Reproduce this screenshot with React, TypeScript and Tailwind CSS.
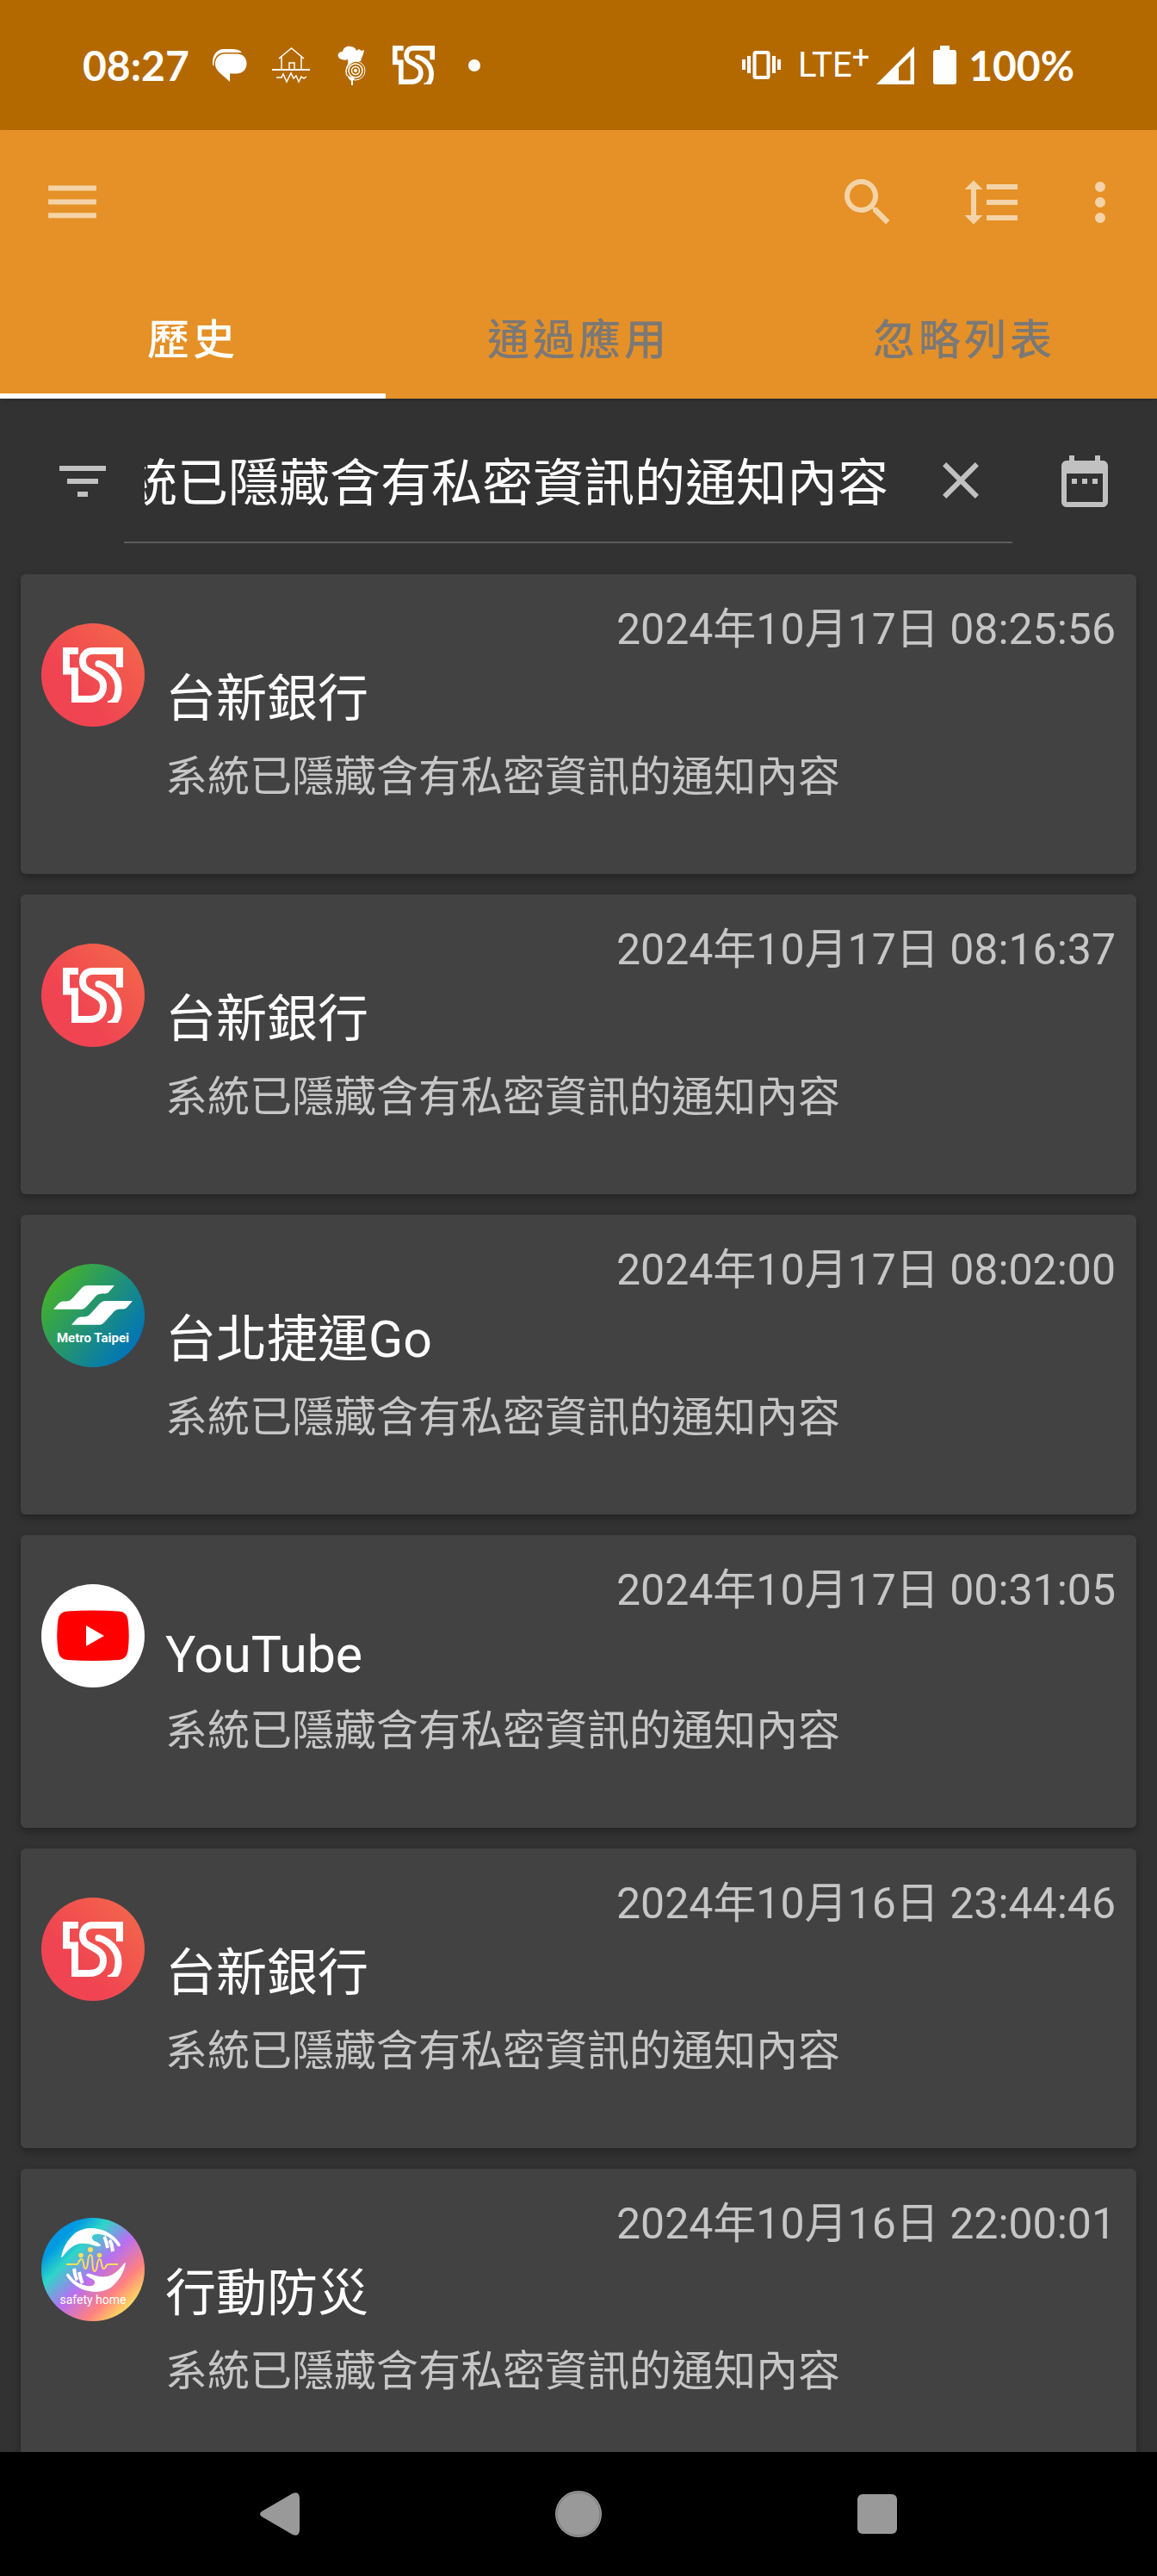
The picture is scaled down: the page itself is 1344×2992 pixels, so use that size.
import React, { useEffect, useRef, useState } from "react";

const HIDDEN_TEXT = "系統已隱藏含有私密資訊的通知內容";

const notifications = [
  { app: "taishin", title: "台新銀行", time: "2024年10月17日 08:25:56" },
  { app: "taishin", title: "台新銀行", time: "2024年10月17日 08:16:37" },
  { app: "metro", title: "台北捷運Go", time: "2024年10月17日 08:02:00" },
  { app: "youtube", title: "YouTube", time: "2024年10月17日 00:31:05" },
  { app: "taishin", title: "台新銀行", time: "2024年10月16日 23:44:46" },
  { app: "safety", title: "行動防災", time: "2024年10月16日 22:00:01" },
];

const tabs = ["歷史", "通過應用", "忽略列表"];

const TaishinMark = () => (
  <g fill="none" stroke="#fff" strokeWidth="8">
    <path d="M43 32H29V55.500H39V88H56C67 88 72 81 72 73C72 66 69 63 60 58C52 54 48 52 48 44C48 36 53 32 60 32H91V51" />
    <path d="M77 94C86 94 89.500 84 89.500 75C89.500 60 78 50 67 47" />
    <circle cx="66.500" cy="47" r="4" fill="#fff" stroke="none" />
  </g>
);

const Icon = ({ d }: { d: string }) => (
  <svg viewBox="0 0 24 24" className="w-[72px] h-[72px]" fill="currentColor">
    <path d={d} />
  </svg>
);

const TaishinLogo = () => (
  <svg viewBox="0 0 120 120" className="w-full h-full">
    <defs>
      <linearGradient id="taishin" x1="0.35" y1="0.65" x2="0.95" y2="0.1">
        <stop offset="0" stopColor="#f04452" />
        <stop offset="1" stopColor="#f3674a" />
      </linearGradient>
      <clipPath id="markBottom">
        <rect width="120" height="92" />
      </clipPath>
    </defs>
    <circle cx="60" cy="60" r="60" fill="url(#taishin)" />
    <g clipPath="url(#markBottom)">
      <TaishinMark />
    </g>
  </svg>
);

const MetroLogo = () => (
  <svg viewBox="0 0 120 120" className="w-full h-full">
    <defs>
      <linearGradient id="metro" x1="0.1" y1="0.2" x2="0.9" y2="0.8">
        <stop offset="0" stopColor="#43b02f" />
        <stop offset="1" stopColor="#0075b8" />
      </linearGradient>
      <path
        id="metroWing"
        d="M14 52.700L20 46C22 44 24 43.500 27 43.500C33 43.500 34 42 37 39L46 29C49 26 50 25 55 25H85L79 32C77 34 76 34.500 72 34.500C67 34.500 65 35.500 62 39L53 49C50 52 49 52.700 46 52.700Z"
      />
    </defs>
    <circle cx="60" cy="60" r="60" fill="url(#metro)" />
    <use href="#metroWing" fill="#fff" />
    <use href="#metroWing" x="21" y="18" fill="#fff" />
    <text
      x="60"
      y="91"
      textAnchor="middle"
      fill="#fff"
      className="font-['Roboto',sans-serif] font-bold text-[15px]"
    >
      Metro Taipei
    </text>
  </svg>
);

const YoutubeLogo = () => (
  <svg viewBox="0 0 120 120" className="w-full h-full">
    <circle cx="60" cy="60" r="60" fill="#fff" />
    <path
      d="M30 31.500Q60 29.500 90 31.500Q99 32 100.500 41Q103 60 100.500 78Q99 87 90 88Q60 90 30 88Q21 87 19.500 78Q17 60 19.500 41Q21 32 30 31.500Z"
      fill="#f00"
    />
    <path d="M52 48L73 60L52 72Z" fill="#fff" />
  </svg>
);

const SafetyLogo = () => (
  <svg viewBox="0 0 120 120" className="w-full h-full">
    <defs>
      <linearGradient id="safety" x1="0" y1="0" x2="1" y2="1">
        <stop offset="0.2" stopColor="#0099e2" />
        <stop offset="0.33" stopColor="#2fd5c8" />
        <stop offset="0.52" stopColor="#b670f2" />
        <stop offset="0.71" stopColor="#ff8080" />
        <stop offset="0.87" stopColor="#ffe45c" />
      </linearGradient>
      <g id="hand">
        <path
          d="M23 46C25 34 31 25 39 18C47 12 58 11 66 13C78 15 87 23 92 31Q92 34 89 33C85 27 80 22 72 20C66 18 60 18 59 22C58 27 64 27 69 31Q69 34 64 33C57 30 50 29 44 30C36 32 29 39 25 45Z"
          fill="#fff"
        />
        <path d="M73 22C75 25 76 30 77 35M79 26C82 29 82 34 83 39" stroke="#fff" strokeWidth="4" fill="none" />
      </g>
    </defs>
    <circle cx="60" cy="60" r="60" fill="url(#safety)" />
    <use href="#hand" />
    <use href="#hand" transform="rotate(180 60.500 49)" />
    <path
      d="M29 54H41C44 54 43 48 46.500 48S48 59 51.500 59S53 43 57 43S58 62 62 62S64 48 67.500 48S69 59 72.500 59S74 54 78 54H89"
      fill="none"
      stroke="#fbe05a"
      strokeWidth="2"
    />
    <g fill="#fbe05a">
      <circle cx="46" cy="43.500" r="2.800" />
      <circle cx="57" cy="37" r="3" />
      <circle cx="67.500" cy="43.500" r="2.800" />
    </g>
    <text
      x="60"
      y="100"
      textAnchor="middle"
      fill="#fff"
      className="font-['Roboto',sans-serif] text-[14px]"
    >
      safety home
    </text>
  </svg>
);

const logos: Record<string, () => React.ReactElement> = {
  taishin: TaishinLogo,
  metro: MetroLogo,
  youtube: YoutubeLogo,
  safety: SafetyLogo,
};

const StatusBar = () => (
  <div className="flex items-center justify-between shrink-0 h-[151px] px-24 bg-[#b36900] text-white font-['Lato',sans-serif] text-[48px]">
    <div className="flex items-center">
      <span className="mr-3 font-bold">08:27</span>
      <span className="flex justify-center w-[71px]">
        <svg viewBox="0 0 40 38" className="w-10 h-[38px]" fill="#fff">
          <path d="M0 18C-1 7 5 0 13 0H22C28 0 32 1.500 34 4H14C6 4 1 10 1.500 20Z" />
          <path d="M14 5.500H28C36 5.500 39.500 11 39.500 17C39.500 24 34 28.500 28 28.500H20V38C12 30 3 26 3 17C3 10 8 5.500 14 5.500Z" />
        </svg>
      </span>
      <span className="flex justify-center w-[71px]">
        <svg viewBox="0 0 44 42" className="w-11 h-[42px]" fill="none" stroke="#fff" strokeWidth="1.500">
          <path d="M8 13L22.500 1L37 13M11 11V25M34 11V25M20 25V18H26V25" />
          <path d="M0 26H44" strokeWidth="2" />
          <path d="M5 35H11L13 31L17 40L22 30L25 36L28 33L31 40L34 34L37 36L40 34" />
        </svg>
      </span>
      <span className="flex justify-center w-[71px]">
        <svg viewBox="0 0 34 46" className="w-[34px] h-[46px]" fill="#fff">
          <path d="M5 16C-1 15-1 7 6 7C7 2 11 0 15 1C19 1 22 4 22 6L25 4L28 6L31 5L30 10C28 13 28 16 27 18C16 17 8 26 11 36C9 34 9 29 11 24C13 20 12 17 12 16C10 17 7 17 5 16Z" />
          <path d="M12 35L20 38L18 41V46H16V41C14 39 12 38 12 35Z" />
          <circle cx="21" cy="29" r="11" fill="none" stroke="#fff" />
          <circle cx="21" cy="29" r="8" fill="none" stroke="#fff" strokeWidth="1.500" />
          <circle cx="21" cy="29" r="4.500" fill="none" stroke="#fff" strokeWidth="1.500" />
          <circle cx="21" cy="29" r="2" />
        </svg>
      </span>
      <span className="flex justify-center w-[71px]">
        <svg viewBox="25 28 70 64" className="w-[49px] h-[45px]">
          <TaishinMark />
        </svg>
      </span>
      <span className="flex justify-center w-[71px]">
        <span className="w-[14px] h-[14px] rounded-full bg-white" />
      </span>
    </div>
    <div className="flex items-center">
      <svg viewBox="0 0 45 33" className="w-[45px] h-[33px]" fill="#fff">
        <rect x="14.500" y="2" width="16" height="29" rx="1.500" fill="none" stroke="#fff" strokeWidth="4" />
        <path d="M0 10H4V22H0ZM6 6H10V26H6ZM35 6H39V26H35ZM41 10H45V22H41Z" />
      </svg>
      <span className="flex ml-5 mr-2 font-['Roboto',sans-serif] text-[40px] leading-[48px]">
        LTE
        <span className="text-[36px] leading-[30px]">+</span>
      </span>
      <svg viewBox="0 0 44 44" className="w-11 h-11" fill="#fff">
        <path fillRule="evenodd" d="M44 0V44H0ZM39.500 11L26 24V39.500H39.500Z" />
      </svg>
      <svg viewBox="0 0 27 45" className="w-[27px] h-[45px] ml-[22px] mr-[14px]" fill="#fff">
        <path d="M8 0H19V5H24Q27 5 27 8V42Q27 45 24 45H3Q0 45 0 42V8Q0 5 3 5H8Z" />
      </svg>
      <span className="font-bold">100%</span>
    </div>
  </div>
);

const Header = () => {
  const [active, setActive] = useState(0);

  return (
    <header className="shrink-0 bg-[#e59127] shadow-md">
      <div className="flex items-center justify-between h-[168px] pl-12 pr-[30px] text-white/60">
        <button aria-label="選單">
          <Icon d="M2.700 5.500H21.300V7.500H2.700ZM2.700 10.800H21.300V12.800H2.700ZM2.700 16.100H21.300V18.100H2.700Z" />
        </button>
        <div className="flex">
          <button aria-label="搜尋" className="mr-[72px]">
            <Icon d="M15.500 14h-.79l-.28-.27A6.471 6.471 0 0 0 16 9.500 6.500 6.500 0 1 0 9.500 16c1.610 0 3.090-.59 4.230-1.570l.27.28v.79l5 4.990L20.490 19l-4.990-5zm-6 0C7.010 14 5 11.990 5 9.500S7.010 5 9.500 5 14 7.010 14 9.500 11.990 14 9.500 14z" />
          </button>
          <button aria-label="行距" className="mr-[54px]">
            <Icon d="M10 13H22V11H10M10 19H22V17H10M10 7H22V5H10M6 7H8.500L5 3.500L1.500 7H4V17H1.500L5 20.500L8.500 17H6V7Z" />
          </button>
          <button aria-label="更多">
            <Icon d="M12 8a2 2 0 1 0 0-4 2 2 0 0 0 0 4zm0 2a2 2 0 1 0 0 4 2 2 0 0 0 0-4zm0 6a2 2 0 1 0 0 4 2 2 0 0 0 0-4z" />
          </button>
        </div>
      </div>
      <nav role="tablist" className="grid grid-cols-3 h-36">
        {tabs.map((tab, i) => (
          <button
            key={tab}
            role="tab"
            aria-selected={i === active}
            onClick={() => setActive(i)}
            className={`border-b-6 pt-4 text-[49px] leading-[72px] font-medium tracking-[4px] ${
              i === active ? "border-white text-white" : "border-transparent text-[#7b7876]"
            }`}
          >
            {tab}
          </button>
        ))}
      </nav>
    </header>
  );
};

const SearchRow = () => {
  const [query, setQuery] = useState(HIDDEN_TEXT);
  const inputRef = useRef<HTMLInputElement>(null);

  // keep the end of a long query in view
  useEffect(() => {
    if (inputRef.current) {
      inputRef.current.scrollLeft = inputRef.current.scrollWidth;
    }
  }, []);

  return (
    <div className="flex items-center pt-6 pb-9 pl-[60px] pr-12 text-[#c1c1c1]">
      <button aria-label="篩選" className="mr-3">
        <Icon d="M10 18h4v-2h-4v2zM3 6v2h18V6H3zm3 7h12v-2H6v2z" />
      </button>
      <div className="flex flex-1 items-center min-w-0 h-36 px-6 border-b-2 border-[#5c5c5c]">
        <input
          ref={inputRef}
          type="text"
          aria-label="搜尋通知"
          value={query}
          onChange={(e) => setQuery(e.target.value)}
          className="flex-1 min-w-0 h-24 pb-1 mr-12 text-white text-[59px] outline-none"
        />
        <button aria-label="清除" onClick={() => setQuery("")}>
          <Icon d="M19 6.410L17.590 5 12 10.590 6.410 5 5 6.410 10.590 12 5 17.590 6.410 19 12 13.410 17.590 19 19 17.590 13.410 12z" />
        </button>
      </div>
      <button aria-label="日期" className="ml-12">
        <Icon d="M9 11H7v2h2v-2zm4 0h-2v2h2v-2zm4 0h-2v2h2v-2zm2-7h-1V2h-2v2H8V2H6v2H5c-1.110 0-1.990.9-1.990 2L3 20c0 1.100.89 2 2 2h14c1.100 0 2-.9 2-2V6c0-1.100-.9-2-2-2zm0 16H5V9h14v11z" />
      </button>
    </div>
  );
};

const NotificationCard = ({ app, title, time }: (typeof notifications)[number]) => {
  const Logo = logos[app];
  // Latin-only titles sit on a shorter line
  const isLatin = /^[A-Za-z ]+$/.test(title);

  return (
    <li className="flex shrink-0 gap-6 px-6 pt-6 pb-[76px] rounded-md bg-[#424242] shadow-[0_4px_10px_rgba(0,0,0,0.3)]">
      <div className="shrink-0 w-[120px] h-[120px] mt-[33px]">
        <Logo />
      </div>
      <div className="flex-1 min-w-0 text-[#c6c6c6]">
        <p className="text-right text-[50px] leading-[80px]">{time}</p>
        <h2
          className={`text-white text-[59px] ${isLatin ? "pb-1 leading-[70px]" : "leading-[82px]"}`}
        >
          {title}
        </h2>
        <p className="mt-[14px] text-[49px] leading-[72px]">{HIDDEN_TEXT}</p>
      </div>
    </li>
  );
};

const NavBar = () => (
  <nav className="flex items-center justify-center gap-[275px] shrink-0 h-36 bg-black text-[#999]">
    <button aria-label="返回">
      <svg viewBox="0 0 72 72" className="w-[72px] h-[72px]" fill="currentColor">
        <path d="M15 33L51 12Q58 9 59 17V55Q58 63 51 60L15 39Q11 36 15 33Z" />
      </svg>
    </button>
    <button aria-label="主畫面">
      <svg viewBox="0 0 72 72" className="w-[72px] h-[72px]">
        <circle cx="36" cy="36" r="27" fill="currentColor" />
        <circle cx="36" cy="36" r="25" fill="none" stroke="#777" />
      </svg>
    </button>
    <button aria-label="最近使用">
      <svg viewBox="0 0 72 72" className="w-[72px] h-[72px]" fill="currentColor">
        <rect x="13" y="13" width="46" height="46" rx="6" />
      </svg>
    </button>
  </nav>
);

const App = () => {
  return (
    <div
      lang="zh-Hant"
      className="flex flex-col h-screen bg-[#323232] font-['Roboto','Noto_Sans_CJK_TC',sans-serif]"
    >
      <StatusBar />
      <Header />
      <main className="flex-1 min-h-0 overflow-hidden">
        <SearchRow />
        <ul className="flex flex-col gap-6 px-6">
          {notifications.map((item) => (
            <NotificationCard key={item.time} {...item} />
          ))}
        </ul>
      </main>
      <NavBar />
    </div>
  );
};

export default App;
